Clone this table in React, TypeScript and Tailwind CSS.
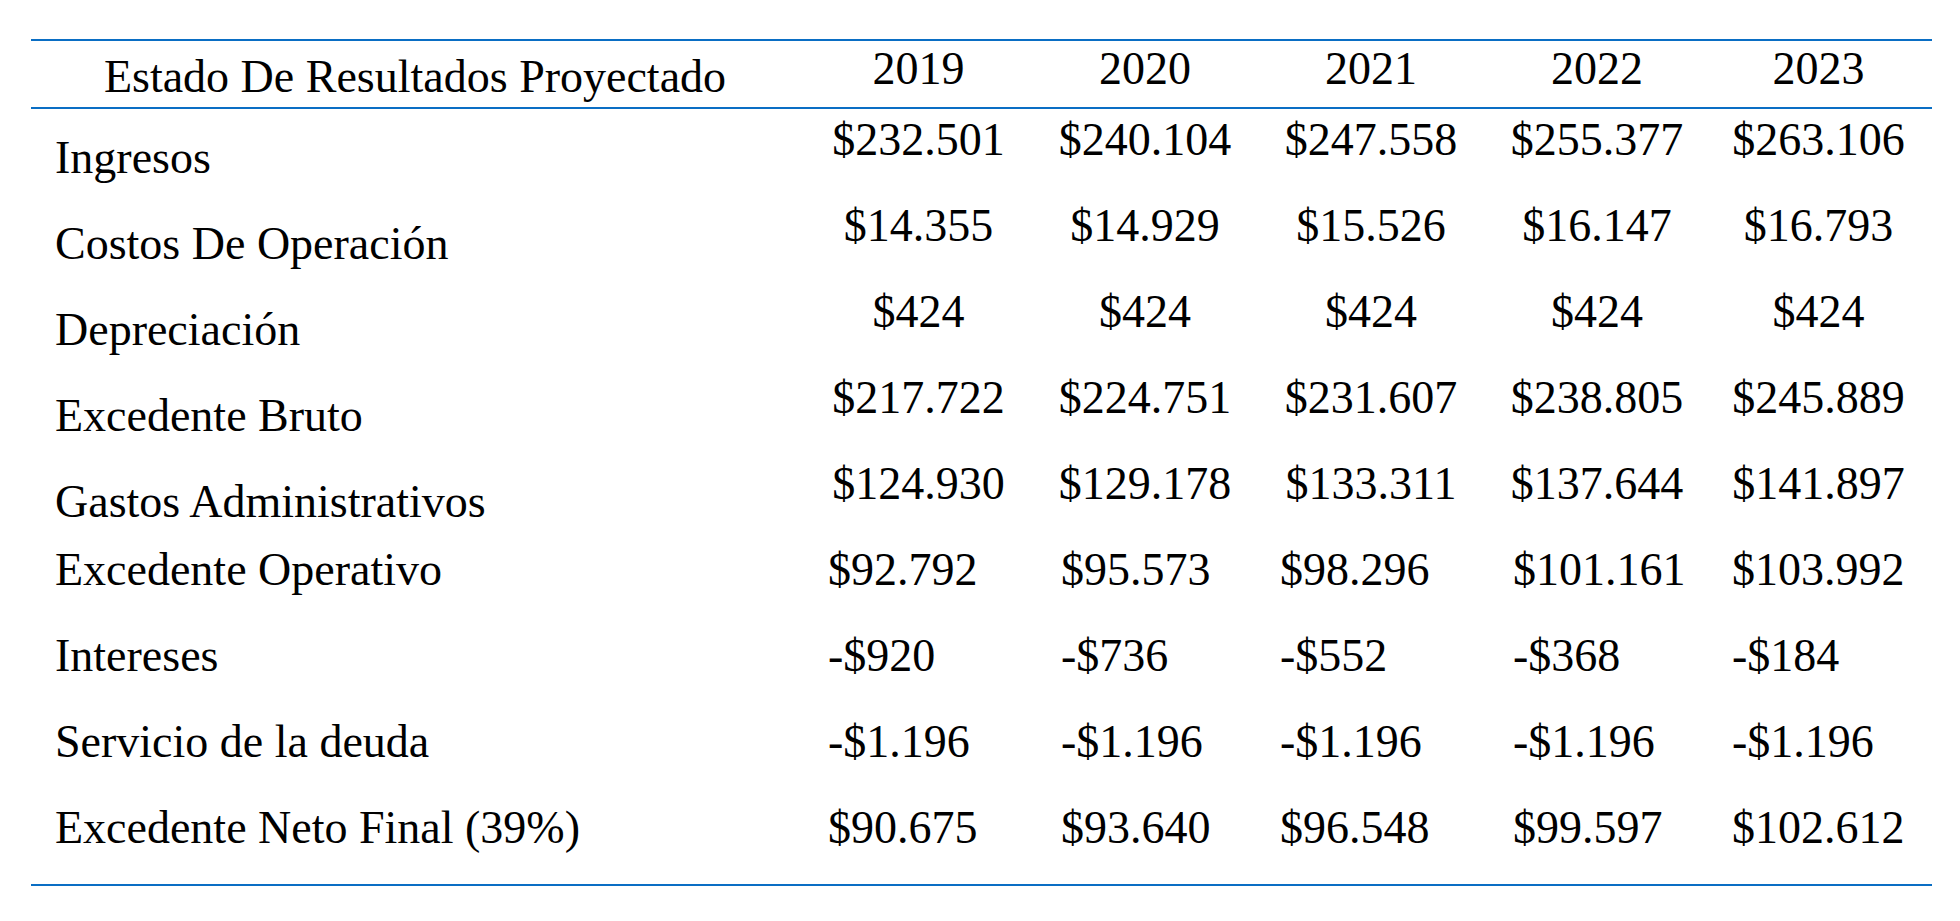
import React from "react";

const years = ["2019", "2020", "2021", "2022", "2023"];

// rows whose values sit centred and a bit higher than the label
const upperRows: { label: string; values: string[] }[] = [
  { label: "Ingresos", values: ["$232.501", "$240.104", "$247.558", "$255.377", "$263.106"] },
  { label: "Costos De Operación", values: ["$14.355", "$14.929", "$15.526", "$16.147", "$16.793"] },
  { label: "Depreciación", values: ["$424", "$424", "$424", "$424", "$424"] },
  { label: "Excedente Bruto", values: ["$217.722", "$224.751", "$231.607", "$238.805", "$245.889"] },
  { label: "Gastos Administrativos", values: ["$124.930", "$129.178", "$133.311", "$137.644", "$141.897"] },
];

// rows whose values are left aligned on the label's baseline
const lowerRows: { label: string; values: string[] }[] = [
  { label: "Excedente Operativo", values: ["$92.792", "$95.573", "$98.296", "$101.161", "$103.992"] },
  { label: "Intereses", values: ["-$920", "-$736", "-$552", "-$368", "-$184"] },
  { label: "Servicio de la deuda", values: ["-$1.196", "-$1.196", "-$1.196", "-$1.196", "-$1.196"] },
  { label: "Excedente Neto Final (39%)", values: ["$90.675", "$93.640", "$96.548", "$99.597", "$102.612"] },
];

const centredGrid = "grid grid-cols-[774px_227px_226px_226px_226px_217px] items-start";
const leftGrid = "grid grid-cols-[797px_233px_219px_233px_219px_200px] items-start";

export default function App() {
  return (
    <div className="w-[1960px] h-[921px] bg-white font-['Liberation_Serif','Times_New_Roman',serif] text-[46px] leading-none text-black">
      <div className="pt-[39px] pl-[31px]">
        <div className="w-[1901px] border-y-2 border-[#0a6ec4]">
          {/* Header */}
          <div className={`${centredGrid} h-[68px] border-b-2 border-[#0a6ec4]`}>
            <div className="pt-[13px] pr-[6px] text-center">Estado De Resultados Proyectado</div>
            {years.map((y) => (
              <div key={y} className="pt-[5px] text-center">
                {y}
              </div>
            ))}
          </div>

          {upperRows.map((row) => (
            <div key={row.label} className={`${centredGrid} h-[86px]`}>
              <div className="pt-[26px] pl-[24px]">{row.label}</div>
              {row.values.map((v, i) => (
                <div key={i} className="pt-[8px] text-center">
                  {v}
                </div>
              ))}
            </div>
          ))}

          {lowerRows.map((row, r) => (
            <div key={row.label} className={`${leftGrid} ${r === 3 ? "h-[87px]" : "h-[86px]"}`}>
              <div className="pt-[8px] pl-[24px]">{row.label}</div>
              {row.values.map((v, i) => (
                <div key={i} className="pt-[8px]">
                  {v}
                </div>
              ))}
            </div>
          ))}
        </div>
      </div>
    </div>
  );
}
